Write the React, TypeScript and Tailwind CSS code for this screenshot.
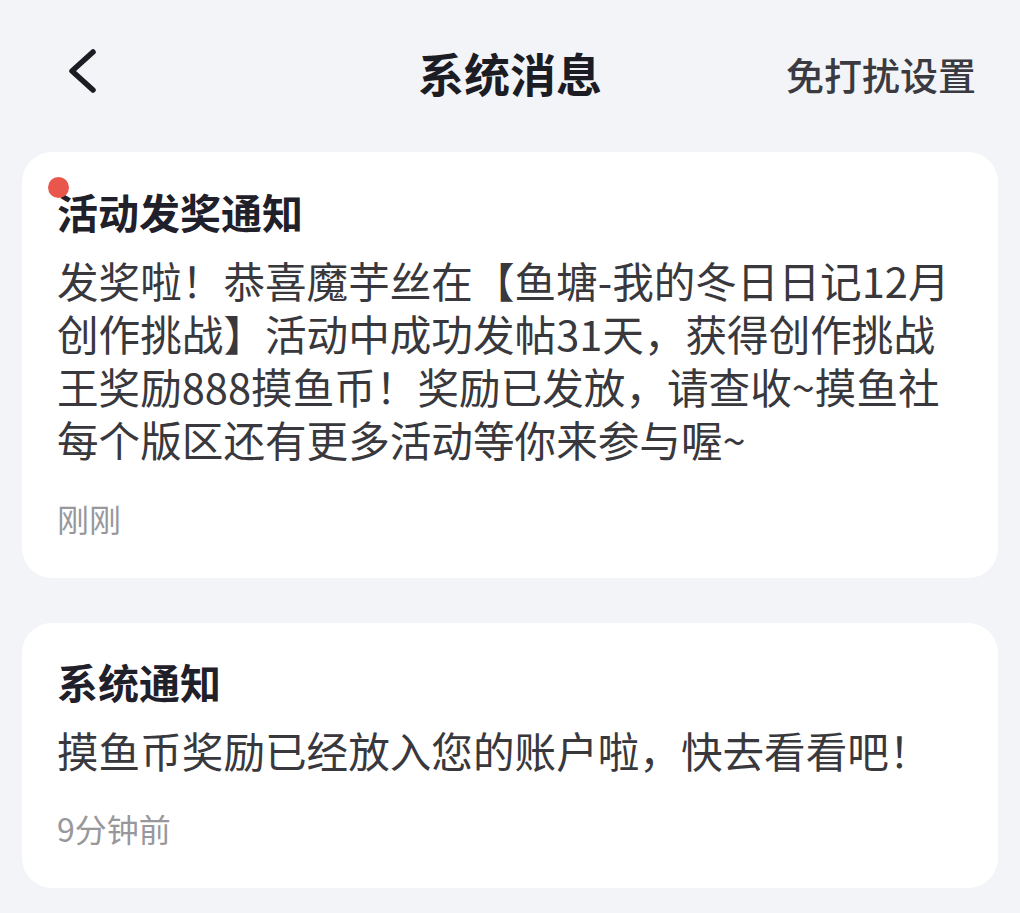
import React from "react";

const font = { fontFamily: '"Noto Sans CJK SC", "Noto Sans", sans-serif' };

function Card({
  title,
  lines,
  time,
  dot,
  className,
  timeGap,
}: {
  title: string;
  lines: string[];
  time: string;
  dot?: boolean;
  className?: string;
  timeGap: string;
}) {
  return (
    <div className={"relative mx-[22px] rounded-[30px] bg-white pl-[35px] pr-[20px] " + (className ?? "")}>
      {dot && (
        <span className="absolute left-[26px] top-[25px] h-[21px] w-[21px] rounded-full bg-[#e9564c]" />
      )}
      <div className="text-[41px] font-bold leading-[56px] text-[#1f2029]">{title}</div>
      <p className="mt-[15px] whitespace-nowrap text-[41.6px] leading-[53px] text-[#38383d]">
        {lines.map((l, i) => (
          <React.Fragment key={i}>
            {i > 0 && <br />}
            {l}
          </React.Fragment>
        ))}
      </p>
      <div className={timeGap + " text-[32px] leading-[42px] text-[#98989c]"}>{time}</div>
    </div>
  );
}

export default function App() {
  return (
    <div className="min-h-[913px] w-[1020px] bg-[#f2f4f8] pb-[20px]" style={font}>
      <div className="relative flex h-[144px] items-center justify-center">
        <svg
          className="absolute left-[64px] top-[48px]"
          width="36"
          height="46"
          viewBox="0 0 36 46"
          fill="none"
        >
          <path
            d="M29 4 L8 23 L29 42"
            stroke="#1c1c24"
            strokeWidth="5.5"
            strokeLinecap="round"
            strokeLinejoin="round"
          />
        </svg>
        <div className="text-[46px] font-bold text-[#1c1c24]">系统消息</div>
        <div className="absolute right-[44px] top-[45px] text-[38px] font-medium text-[#3a3a40]">
          免打扰设置
        </div>
      </div>
      <Card
        className="mt-[8px] h-[426px] pt-[31px]"
        dot
        title="活动发奖通知"
        timeGap="mt-[31px]"
        lines={[
          "发奖啦！恭喜魔芋丝在【鱼塘-我的冬日日记12月",
          "创作挑战】活动中成功发帖31天，获得创作挑战",
          "王奖励888摸鱼币！奖励已发放，请查收~摸鱼社",
          "每个版区还有更多活动等你来参与喔~",
        ]}
        time="刚刚"
      />
      <Card
        className="mt-[45px] h-[265px] pt-[30px]"
        title="系统通知"
        timeGap="mt-[30px]"
        lines={["摸鱼币奖励已经放入您的账户啦，快去看看吧！"]}
        time="9分钟前"
      />
    </div>
  );
}
